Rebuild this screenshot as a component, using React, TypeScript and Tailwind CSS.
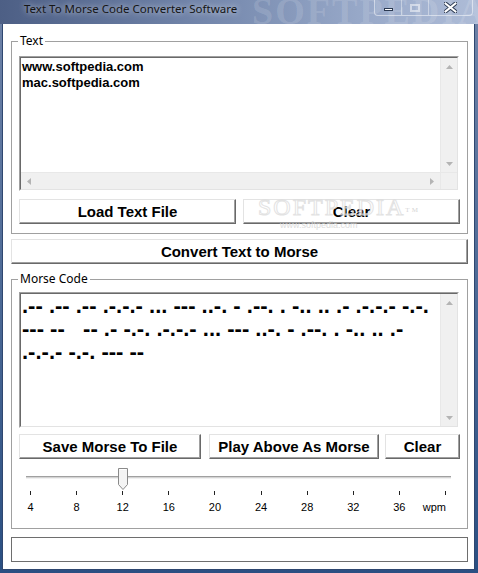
import React from 'react';

const ui = "font-['Liberation_Sans',Arial,sans-serif]";
const seg = "font-['Noto_Sans','Liberation_Sans',sans-serif]";

const morseLines = [
  '.-- .-- .-- .-.-.- ... --- ..-. - .--. . -.. .. .- .-.-.- -.-.',
  '--- --   -- .- -.-. .-.-.- ... --- ..-. - .--. . -.. .. .-',
  '.-.-.- -.-. --- --',
];

const ticks = ['4', '8', '12', '16', '20', '24', '28', '32', '36', 'wpm'];

function Arrow({ dir }: { dir: 'up' | 'down' | 'left' | 'right' }) {
  const pts = {
    up: '0,4 3.5,0 7,4',
    down: '0,0 7,0 3.5,4',
    left: '4,0 4,7 0,3.5',
    right: '0,0 0,7 4,3.5',
  }[dir];
  const vertical = dir === 'up' || dir === 'down';
  return (
    <svg width={vertical ? 7 : 4} height={vertical ? 4 : 7} viewBox={vertical ? '0 0 7 4' : '0 0 4 7'}>
      <polygon points={pts} fill="#b4b4b4" />
    </svg>
  );
}

function VScroll() {
  return (
    <div className="flex w-[17px] shrink-0 flex-col justify-between border-l border-[#e8e8e8] bg-[#f0f0f0]">
      <div className="flex h-[17px] items-center justify-center">
        <Arrow dir="up" />
      </div>
      <div className="flex h-[17px] items-center justify-center">
        <Arrow dir="down" />
      </div>
    </div>
  );
}

function Sunken({ className, children }: { className: string; children: React.ReactNode }) {
  return (
    <div className={`border border-t-[#a0a0a0] border-l-[#a0a0a0] border-r-white border-b-white ${className}`}>
      <div className="flex h-full flex-col border border-t-[#696969] border-l-[#696969] border-r-[#e3e3e3] border-b-[#e3e3e3] bg-white">
        {children}
      </div>
    </div>
  );
}

function Btn({ label, className = '' }: { label: string; className?: string }) {
  return (
    <button
      className={`flex h-[25px] items-center justify-center border border-t-[#e3e3e3] border-l-[#e3e3e3] border-r-[#696969] border-b-[#696969] bg-white text-[15px] font-bold leading-[17px] text-black shadow-[inset_-1px_-1px_0_#a0a0a0] ${ui} ${className}`}
    >
      {label}
    </button>
  );
}

function Group({ label, className, children }: { label: string; className: string; children: React.ReactNode }) {
  return (
    <div className={`relative border border-[#a0a0a0] ${className}`}>
      <span className={`absolute -top-[8px] left-[6px] bg-white px-[2px] text-[12px] leading-[14px] text-black ${seg}`}>
        {label}
      </span>
      {children}
    </div>
  );
}

export default function App() {
  return (
    <div className="relative flex h-[573px] w-[478px] flex-col overflow-hidden bg-[linear-gradient(180deg,#6f83a8_0%,#4d6a96_50%,#2a4f82_100%)]">
      {/* title bar */}
      <div className="relative flex h-[24px] shrink-0 overflow-hidden bg-[linear-gradient(90deg,#4d5f85_0%,#62759b_25%,#7b8eb2_50%,#97a8c8_75%,#aebcd7_100%)]">
        <span className="pointer-events-none absolute left-[252px] -top-[9px] font-['Liberation_Serif',serif] text-[38px] font-bold leading-[40px] tracking-[2px] text-white/15">
          SOFTPEDIA
        </span>
        <span className={`relative pl-[24px] pt-[1px] text-[11.5px] leading-[16px] text-[#151515] [text-shadow:0_0_6px_rgba(255,255,255,0.8)] ${seg}`}>
          Text To Morse Code Converter Software
        </span>
        <div className="absolute right-[5px] top-0 flex h-[16px] overflow-hidden rounded-b-[4px] border border-t-0 border-white/50">
          <div className="flex w-[27px] items-center justify-center border-r border-white/40">
            <div className="mt-[3px] h-[3px] w-[9px] border border-[#2c3a52] bg-white" />
          </div>
          <div className="flex w-[27px] items-center justify-center border-r border-white/40">
            <div className="h-[8px] w-[10px] border-2 border-white/50" />
          </div>
          <div className="flex w-[43px] items-center justify-center">
            <svg width="13" height="11" viewBox="0 0 13 11">
              <path d="M1.5 1.5 L11.5 9.5 M11.5 1.5 L1.5 9.5" stroke="#2c3a52" strokeWidth="4" strokeLinecap="square" />
              <path d="M1.5 1.5 L11.5 9.5 M11.5 1.5 L1.5 9.5" stroke="white" strokeWidth="2" strokeLinecap="square" />
            </svg>
          </div>
        </div>
      </div>

      <div className="flex shrink-0">
        <div className="ml-[3px] h-[545px] w-[471px] bg-white pl-[8px] shadow-[0_0_0_1px_#2f4770]">
          {/* Text group */}
          <Group label="Text" className="mt-[17px] h-[193px] w-[457px] pl-[7px] pt-[14px]">
            <Sunken className="h-[135px] w-[440px]">
              <div className="flex min-h-0 flex-1">
                <div className={`flex-1 pl-[1px] pt-[1px] text-[13px] font-bold leading-[16px] text-black ${ui}`}>
                  <div>www.softpedia.com</div>
                  <div>mac.softpedia.com</div>
                </div>
                <VScroll />
              </div>
              <div className="flex h-[17px] shrink-0 border-t border-[#e8e8e8] bg-[#f0f0f0]">
                <div className="flex flex-1 items-center justify-between px-[6px]">
                  <Arrow dir="left" />
                  <Arrow dir="right" />
                </div>
                <div className="w-[17px] border-l border-[#e8e8e8]" />
              </div>
            </Sunken>
            <div className="relative mt-[8px] flex gap-[7px]">
              <Btn label="Load Text File" className="w-[217px]" />
              <Btn label="Clear" className="w-[217px]" />
              <div className="pointer-events-none absolute left-[239px] -top-[5px] flex flex-col items-start opacity-80">
                <span className="font-['Liberation_Serif',serif] text-[24px] leading-[26px] tracking-[2px] text-white [-webkit-text-stroke:1px_#dcdcdc]">
                  SOFTPEDIA<sup className="text-[7px] text-[#cccccc] [-webkit-text-stroke:0]">TM</sup>
                </span>
                <span className={`ml-[22px] text-[9px] leading-[10px] text-[#d4d4d4] ${ui}`}>www.softpedia.com</span>
              </div>
            </div>
          </Group>

          <Btn label="Convert Text to Morse" className="mt-[5px] w-[457px]" />

          {/* Morse group */}
          <Group label="Morse Code" className="mt-[15px] h-[250px] w-[457px] pl-[7px] pt-[12px]">
            <Sunken className="h-[136px] w-[440px]">
              <div className="flex min-h-0 flex-1">
                <div className={`flex-1 overflow-hidden whitespace-pre pl-[1px] text-[22px] font-bold leading-[23px] text-black ${ui}`}>
                  {morseLines.map((l, i) => (
                    <div key={i}>{l}</div>
                  ))}
                </div>
                <VScroll />
              </div>
            </Sunken>
            <div className="mt-[6px] flex">
              <Btn label="Save Morse To File" className="w-[182px]" />
              <Btn label="Play Above As Morse" className="ml-[8px] w-[170px]" />
              <Btn label="Clear" className="ml-[6px] w-[75px]" />
            </div>

            {/* speed slider */}
            <div className="relative mt-[9px] h-[22px] w-[440px]">
              <div className="absolute left-[7px] top-[8px] h-[3px] w-[425px] border-t border-t-[#a0a0a0] border-b border-b-[#f0f0f0] bg-[#d4d4d4]" />
              <svg className="absolute left-[99px] top-0" width="10" height="22" viewBox="0 0 10 22">
                <path d="M0.5 0.5 H9.5 V16.5 L5 21.5 L0.5 16.5 Z" fill="#f4f4f4" stroke="#8a8a8a" />
                <path d="M1.5 1.5 H8.5" stroke="white" />
              </svg>
            </div>
            <div className="ml-[11px] mt-[1px] flex h-[4px] w-[416px] justify-between">
              {ticks.map((t) => (
                <div key={t} className="h-[4px] w-px bg-[#222]" />
              ))}
            </div>
            <div className={`ml-[11px] mt-[6px] flex w-[416px] justify-between text-[11px] leading-[13px] text-black ${ui}`}>
              {ticks.map((t, i) => (
                <div key={t} className={`flex w-px whitespace-nowrap ${i === ticks.length - 1 ? 'justify-end' : 'justify-center'}`}>
                  {t}
                </div>
              ))}
            </div>
          </Group>

          {/* status bar */}
          <div className="mt-[8px] h-[25px] w-[457px] border border-[#6e6e6e]" />
        </div>
      </div>
    </div>
  );
}
